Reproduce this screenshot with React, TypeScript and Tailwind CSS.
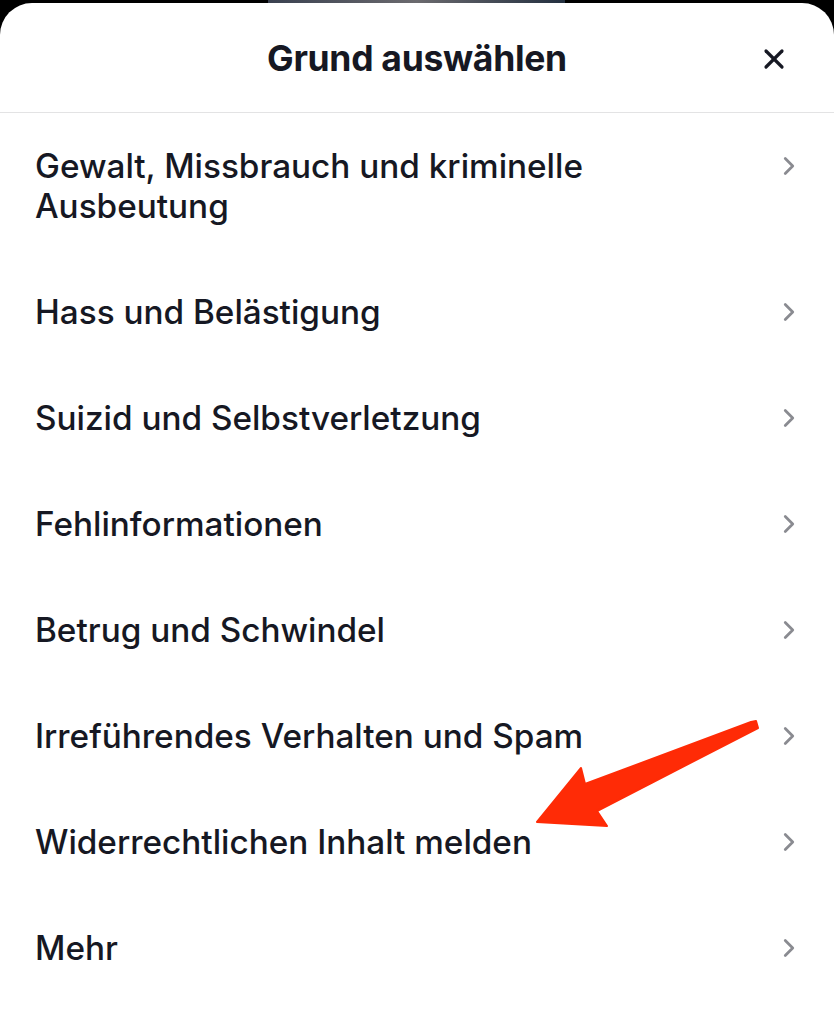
import { ChevronRight, X } from "lucide-react";

const reasons = [
    "Gewalt, Missbrauch und kriminelle Ausbeutung",
    "Hass und Belästigung",
    "Suizid und Selbstverletzung",
    "Fehlinformationen",
    "Betrug und Schwindel",
    "Irreführendes Verhalten und Spam",
    "Widerrechtlichen Inhalt melden",
    "Mehr",
];

const ReasonRow = ({ label }: { label: string }) => {
    return (
        <div className="flex items-start justify-between pl-[35px] pr-[30px] py-[33px]">
            <span className="max-w-[640px] text-[33.3px] leading-[40px] font-medium text-[#161823]">
                {label}
            </span>
            <div className="h-[40px] flex items-center">
                <ChevronRight className="w-[30px] h-[30px] text-[#8a8b91]" strokeWidth={2.2} />
            </div>
        </div>
    );
};

const Arrow = () => (
    <svg
        className="absolute left-0 top-0 pointer-events-none"
        width="834"
        height="1024"
        viewBox="0 0 834 1024"
    >
        <polygon
            points="537,822 581,768 585,784 751,722 756,721 758,728 597,811 607,826"
            fill="#ff2b06"
            stroke="#ff2b06"
            strokeWidth="2"
            strokeLinejoin="round"
        />
    </svg>
);

export default function App() {
    return (
        <div className="relative w-[834px] h-[1024px] overflow-hidden bg-black font-['Inter',sans-serif]">
            <div className="flex h-[3px]">
                <div className="w-[268px]" />
                <div className="w-[297px] bg-gradient-to-r from-[#3a4150] via-[#6b6a6e] to-[#243040]" />
            </div>
            <div className="h-[1021px] bg-white rounded-t-[32px]">
                <div className="relative flex items-center justify-center h-[110px] border-b border-[#e3e3e4]">
                    <h1 className="text-[35.5px] font-bold tracking-[-0.3px] text-[#161823] mt-[3px]">Grund auswählen</h1>
                    <X className="absolute right-[44px] top-[40px] w-[32px] h-[32px] text-[#161823]" strokeWidth={2.4} />
                </div>
                <div className="flex flex-col">
                    {reasons.map((r) => (
                        <ReasonRow key={r} label={r} />
                    ))}
                </div>
            </div>
            <Arrow />
        </div>
    );
}
